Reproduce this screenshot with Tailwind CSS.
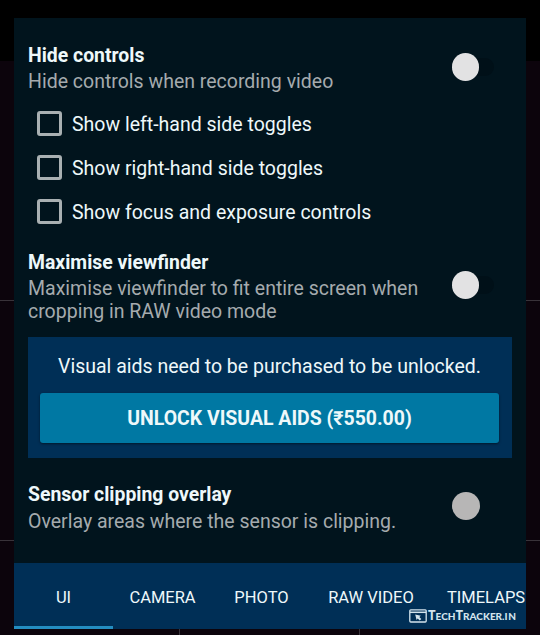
<!DOCTYPE html>
<html lang="en">
<head>
<meta charset="utf-8">
<title>Camera settings</title>
<script src="https://cdn.jsdelivr.net/npm/@tailwindcss/browser@4"></script>
</head>
<body class="relative h-[635px] w-[540px] overflow-hidden bg-[#0c040c] font-[Roboto,sans-serif] text-[19.5px] leading-6 text-[#eef8fa]">
  <!-- Viewfinder behind the panel -->
  <div class="absolute inset-x-0 top-0 h-[61px] bg-black"></div>
  <div class="absolute inset-x-0 top-[300px] h-px bg-[#39333a]"></div>
  <div class="absolute inset-x-0 top-[540px] h-px bg-[#39333a]"></div>
  <div class="absolute bottom-0 left-[179px] h-2 w-px bg-[#39333a]"></div>
  <div class="absolute bottom-0 left-[359px] h-2 w-px bg-[#39333a]"></div>

  <main class="relative ml-[14px] flex h-[629px] w-[512px] flex-col pt-[18px]">
    <div class="h-[545px] bg-[#01141d] px-[14px] pt-[26px]">
      <section class="flex h-[51px] justify-between">
        <div>
          <h2 class="text-[19.4px] font-bold whitespace-nowrap">Hide controls</h2>
          <p class="mt-[2px] whitespace-nowrap text-[#a5abae]">Hide controls when recording video</p>
        </div>
        <div class="mt-[9px] mr-[17.8px] flex h-7 w-[42px] items-center"><span class="z-10 size-7 rounded-full bg-[#e2e2e3]"></span><span class="-ml-3 h-[18px] w-7 rounded-full bg-[#001018]"></span></div>
      </section>

      <ul class="mt-2 pl-[9px]">
        <li class="flex h-11 items-center"><span class="mt-[-4px] mr-[10px] size-[25px] rounded-[3px] border-3 border-[#a9b0b2]"></span>Show left-hand side toggles</li>
        <li class="flex h-11 items-center"><span class="mt-[-4px] mr-[10px] size-[25px] rounded-[3px] border-3 border-[#a9b0b2]"></span>Show right-hand side toggles</li>
        <li class="flex h-11 items-center"><span class="mt-[-4px] mr-[10px] size-[25px] rounded-[3px] border-3 border-[#a9b0b2]"></span>Show focus and exposure controls</li>
      </ul>

      <section class="mt-4 flex h-[75px] justify-between">
        <div>
          <h2 class="text-[19.4px] font-bold whitespace-nowrap">Maximise viewfinder</h2>
          <p class="mt-[2px] leading-[23px] whitespace-nowrap text-[#a5abae]">Maximise viewfinder to fit entire screen when<br>cropping in RAW video mode</p>
        </div>
        <div class="mt-[20px] mr-[17.8px] -ml-4 flex h-7 w-[42px] items-center"><span class="z-10 size-7 rounded-full bg-[#e2e2e3]"></span><span class="-ml-3 h-[18px] w-7 rounded-full bg-[#001018]"></span></div>
      </section>

      <section class="mt-[11px] h-[121px] bg-[#002f56] pt-[17px] pr-[13px] pl-3">
        <p class="pt-px text-center whitespace-nowrap">Visual aids need to be purchased to be unlocked.</p>
        <button class="mt-[14px] block h-[50px] w-full rounded-[3px] bg-[#0078a3] pt-[2px] text-[19.45px] font-bold shadow-sm shadow-black/40">UNLOCK VISUAL AIDS (₹550.00)</button>
      </section>

      <section class="mt-[25px] flex justify-between">
        <div>
          <h2 class="text-[19.4px] font-bold whitespace-nowrap">Sensor clipping overlay</h2>
          <p class="mt-[3px] whitespace-nowrap text-[#a5abae]">Overlay areas where the sensor is clipping.</p>
        </div>
        <div class="mt-[9px] mr-[17.8px] h-7 w-[42px]"><span class="block size-7 rounded-full bg-[#b7b6b6]"></span></div>
      </section>
    </div>

    <nav class="flex h-[66px] bg-[#002f56] text-[16.5px] leading-[69px] whitespace-nowrap">
      <div class="h-[66px] w-[99px] shrink-0 border-b-[3px] border-[#248dc0] text-center">UI</div>
      <div class="w-[99px] shrink-0 text-center">CAMERA</div>
      <div class="w-[99px] shrink-0 text-center">PHOTO</div>
      <div class="w-[120px] shrink-0 text-center">RAW VIDEO</div>
      <div class="shrink-0 pl-4">TIMELAPS</div>
    </nav>
  </main>

  <!-- Watermark -->
  <div class="absolute top-[608px] left-[409px] flex items-center text-[#d3e4ed]">
    <svg class="h-[14px] w-[18px]" viewBox="0 0 18 14" fill="none" stroke="currentColor" stroke-width="1.3"><rect x=".8" y=".8" width="16.4" height="12.2" rx="1"/><path d="M1 3.3h16" stroke-width="1.5"/><path d="M6.2 5.5l5.6 1.2-1.5 1.3 2 2-1.6 1.5-2-2-1.1 1.5z" fill="currentColor" stroke="none"/></svg>
    <span class="ml-[1px] pt-px font-[Lato,sans-serif] text-[12.5px] leading-[14px] font-black whitespace-nowrap">T<span class="text-[10px]">ECH</span>T<span class="text-[10px]">RACKER.<span class="tracking-[0.6px]">IN</span></span></span>
  </div>
</body>
</html>
